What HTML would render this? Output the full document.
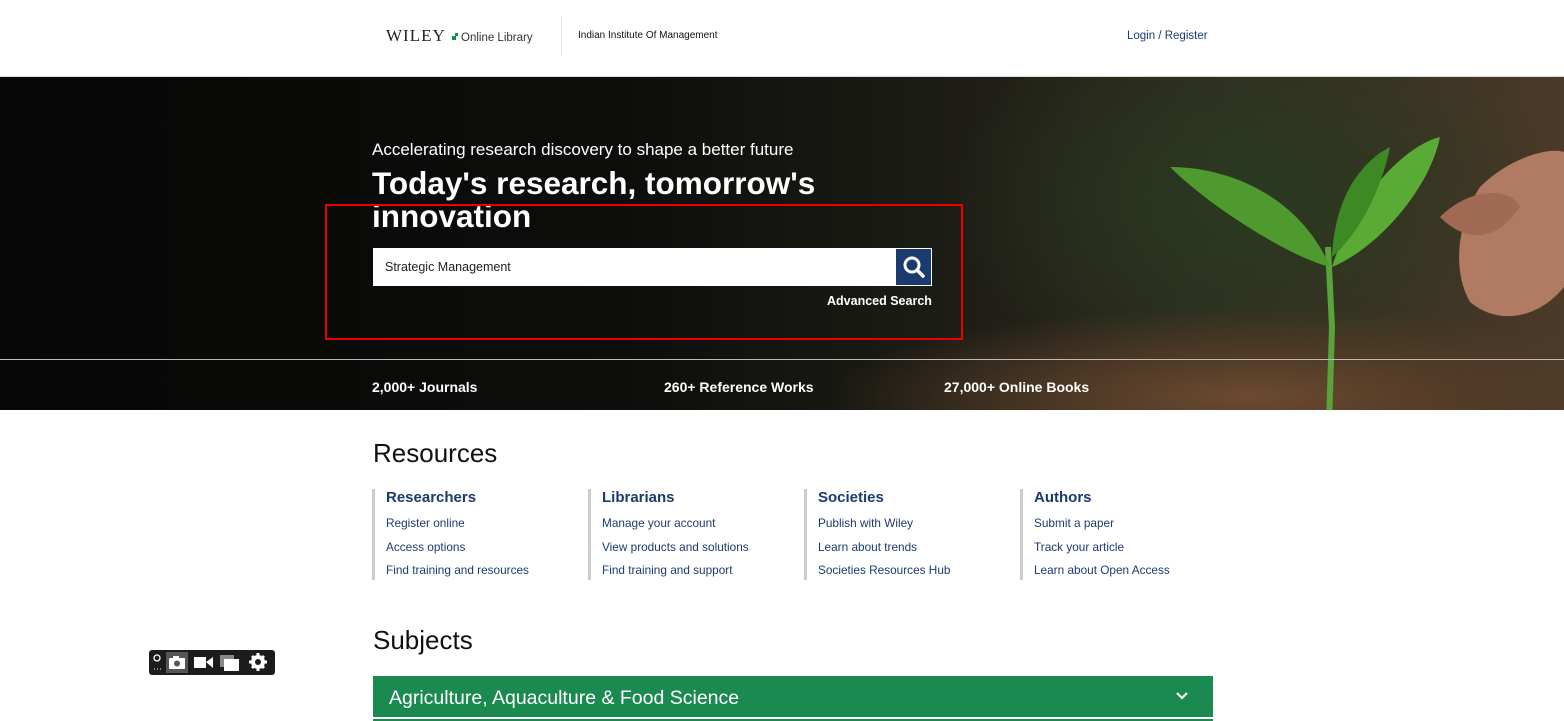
<!DOCTYPE html>
<html><head><meta charset="utf-8"><style>
*{margin:0;padding:0;box-sizing:border-box}
body{width:1564px;height:721px;overflow:hidden;background:#fff;font-family:"Liberation Sans",sans-serif;position:relative}
.a{position:absolute}
.hero{left:0;top:77px;width:1564px;height:333px;overflow:hidden;background:
radial-gradient(ellipse 420px 90px at 1250px 320px,#6b4a30 0%,rgba(90,62,40,.7) 50%,transparent 100%),
radial-gradient(ellipse 300px 200px at 1250px 120px,#2a3a20 0%,transparent 100%),
linear-gradient(90deg,#070707 0%,#0d0d0b 40%,#1e1e17 62%,#302b1f 78%,#4a3a28 100%)}
.col h3{color:#1b3b6f;font-size:15px;font-weight:bold;margin-bottom:10px}
.col div{color:#1b3b6f;font-size:11.8px;height:23.5px}
.col{border-left:3px solid #ccc;padding-left:11px;height:91px}
</style></head><body>
<div class="a" style="left:386px;top:26px;font-family:'Liberation Serif',serif;font-size:17px;letter-spacing:1px;color:#222">WILEY</div>
<div class="a" style="left:452px;top:36px;width:4px;height:4px;background:#1a8a4e"></div>
<div class="a" style="left:455px;top:33px;width:3px;height:3px;background:#1a8a4e"></div>
<div class="a" style="left:461px;top:32px;font-size:11.5px;color:#333">Online Library</div>
<div class="a" style="left:561px;top:16px;width:1px;height:40px;background:#e3e3e3"></div>
<div class="a" style="left:578px;top:30px;font-size:10px;color:#111">Indian Institute Of Management</div>
<div class="a" style="left:1127px;top:30px;font-size:11.5px;color:#1b3b6f">Login / Register</div>
<div class="a" style="left:0;top:76px;width:1564px;height:1px;background:#ddd"></div>
<div class="a hero">
 <svg class="a" style="left:1150px;top:50px" width="414" height="283">
  <path d="M330 60 C360 30 400 20 414 25 L414 160 C390 190 350 200 320 175 C300 140 310 90 330 60Z" fill="#b07a63"/>
  <path d="M290 90 C320 60 360 60 370 80 C350 110 320 120 290 90Z" fill="#a06a55"/>
  <path d="M178 330 L182 200 L178 120" stroke="#5aa33a" stroke-width="6" fill="none"/>
  <path d="M180 140 C140 130 60 80 20 40 C80 40 150 70 180 140Z" fill="#4f9a2e"/>
  <path d="M182 140 C200 80 250 20 290 10 C280 60 230 120 182 140Z" fill="#5aab35"/>
  <path d="M182 130 C185 60 220 30 240 20 C230 70 205 110 182 130Z" fill="#3d8a25"/>
 </svg>
 <div class="a" style="left:0;top:282px;width:1564px;height:1px;background:#bbb"></div>
 <div class="a" style="left:372px;top:63px;color:#fff;font-size:17px">Accelerating research discovery to shape a better future</div>
 <div class="a" style="left:372px;top:90px;color:#fff;font-size:31.5px;font-weight:bold;line-height:33px;width:520px">Today's research, tomorrow's innovation</div>
 <div class="a" style="left:373px;top:171px;width:522px;height:38px;background:#fff;font-size:12.5px;color:#222;padding:12px 0 0 12px">Strategic Management</div>
 <div class="a" style="left:895px;top:171px;width:37px;height:38px;background:#1b3b6f;border:1px solid #fff">
  <svg width="35" height="36"><circle cx="16" cy="16" r="7" stroke="#fff" stroke-width="3" fill="none"/><path d="M21 21 L27 27" stroke="#fff" stroke-width="3.5" stroke-linecap="round"/></svg></div>
 <div class="a" style="left:827px;top:217px;color:#fff;font-size:12.5px;font-weight:bold">Advanced Search</div>
 <div class="a" style="left:372px;top:302px;color:#fff;font-size:14px;font-weight:bold">2,000+ Journals</div>
 <div class="a" style="left:664px;top:302px;color:#fff;font-size:14px;font-weight:bold">260+ Reference Works</div>
 <div class="a" style="left:944px;top:302px;color:#fff;font-size:14px;font-weight:bold">27,000+ Online Books</div>
</div>
<div class="a" style="left:325px;top:204px;width:638px;height:136px;border:2px solid #e00"></div>
<div class="a" style="left:373px;top:438px;font-size:26px;color:#111">Resources</div>
<div class="a col" style="left:372px;top:489px"><h3>Researchers</h3><div>Register online</div><div>Access options</div><div>Find training and resources</div></div>
<div class="a col" style="left:588px;top:489px"><h3>Librarians</h3><div>Manage your account</div><div>View products and solutions</div><div>Find training and support</div></div>
<div class="a col" style="left:804px;top:489px"><h3>Societies</h3><div>Publish with Wiley</div><div>Learn about trends</div><div>Societies Resources Hub</div></div>
<div class="a col" style="left:1020px;top:489px"><h3>Authors</h3><div>Submit a paper</div><div>Track your article</div><div>Learn about Open Access</div></div>
<div class="a" style="left:373px;top:625px;font-size:26px;color:#111">Subjects</div>
<div class="a" style="left:373px;top:676px;width:840px;height:41px;background:#1a8a50;color:#fff;font-size:19.5px;font-weight:300;padding:11px 0 0 16px">Agriculture, Aquaculture &amp; Food Science
 <svg class="a" style="left:802px;top:15px" width="14" height="10"><path d="M2 2 L7 7 L12 2" stroke="#fff" stroke-width="2.2" fill="none"/></svg></div>
<div class="a" style="left:373px;top:719px;width:840px;height:2px;background:#1a8a50"></div>
<div class="a" style="left:149px;top:650px;width:126px;height:25px;background:#1c1c1c;border-radius:3px">
 <div class="a" style="left:17px;top:2px;width:22px;height:21px;background:#555"></div>
 <svg class="a" style="left:0;top:0" width="126" height="25">
  <circle cx="8" cy="8" r="3" fill="none" stroke="#fff" stroke-width="1.3"/><path d="M5 19h1M8 19h1M11 19h1" stroke="#fff"/>
  <rect x="20" y="8" width="16" height="11" rx="1" fill="#fff"/><rect x="24" y="6" width="6" height="3" fill="#fff"/><circle cx="28" cy="13.5" r="3" fill="#555"/>
  <rect x="45" y="7" width="12" height="11" fill="#fff"/><path d="M57 12 L64 7 V18Z" fill="#fff"/>
  <rect x="71" y="5" width="14" height="12" fill="#888"/><rect x="75" y="9" width="15" height="12" fill="#fff"/>
  <circle cx="109" cy="12" r="7" fill="#fff"/>
  <path d="M109 3v18M100 12h18M103 6l12 12M115 6l-12 12" stroke="#fff" stroke-width="3"/><circle cx="109" cy="12" r="3" fill="#1c1c1c"/>
 </svg>
</div>
</body></html>
